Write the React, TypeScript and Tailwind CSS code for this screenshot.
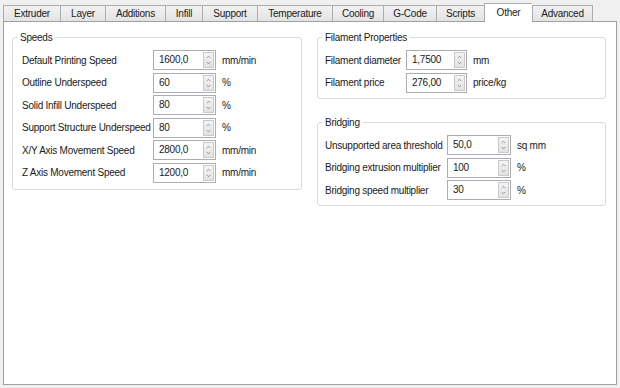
import { ChevronUp, ChevronDown } from "lucide-react";

type Field = { label: string; value: string; unit: string };

const tabs: { name: string; w: string }[] = [
  { name: "Extruder", w: "w-[57px]" },
  { name: "Layer", w: "w-[45px]" },
  { name: "Additions", w: "w-[60px]" },
  { name: "Infill", w: "w-[37px]" },
  { name: "Support", w: "w-[55px]" },
  { name: "Temperature", w: "w-[75px]" },
  { name: "Cooling", w: "w-[51px]" },
  { name: "G-Code", w: "w-[53px]" },
  { name: "Scripts", w: "w-[48px]" },
  { name: "Other", w: "w-[48px]" },
  { name: "Advanced", w: "w-[61px]" },
];

const speeds: Field[] = [
  { label: "Default Printing Speed", value: "1600,0", unit: "mm/min" },
  { label: "Outline Underspeed", value: "60", unit: "%" },
  { label: "Solid Infill Underspeed", value: "80", unit: "%" },
  { label: "Support Structure Underspeed", value: "80", unit: "%" },
  { label: "X/Y Axis Movement Speed", value: "2800,0", unit: "mm/min" },
  { label: "Z Axis Movement Speed", value: "1200,0", unit: "mm/min" },
];

const filament: Field[] = [
  { label: "Filament diameter", value: "1,7500", unit: "mm" },
  { label: "Filament price", value: "276,00", unit: "price/kg" },
];

const bridging: Field[] = [
  { label: "Unsupported area threshold", value: "50,0", unit: "sq mm" },
  { label: "Bridging extrusion multiplier", value: "100", unit: "%" },
  { label: "Bridging speed multiplier", value: "30", unit: "%" },
];

function SpinBox({ value, width }: { value: string; width: string }) {
  return (
    <div className={`flex h-[20px] ${width} items-stretch border border-[#abadb3] bg-white`}>
      <span className="flex-1 pl-[5px] leading-[18px]">{value}</span>
      <div className="my-[1px] mr-[1px] flex w-[11px] flex-col border border-[#c9c9c9] bg-gradient-to-b from-[#f4f4f4] to-[#e2e2e2] text-[#7a7a7a]">
        <ChevronUp size={7} strokeWidth={3} className="mx-auto mt-[1px]" />
        <ChevronDown size={7} strokeWidth={3} className="mx-auto mt-auto mb-[1px]" />
      </div>
    </div>
  );
}

function Group({
  title,
  fields,
  labelW,
  boxW,
  className,
  legendClass,
}: {
  title: string;
  fields: Field[];
  labelW: string;
  boxW: string;
  className?: string;
  legendClass: string;
}) {
  return (
    <fieldset className={`rounded-[3px] border border-[#d5dbe0] ${className ?? ""}`}>
      <legend className={`${legendClass} px-[3px] leading-[13px]`}>{title}</legend>
      <div className="flex flex-col gap-[2.6px]">
        {fields.map((f) => (
          <div key={f.label} className="flex h-[20px] items-center whitespace-nowrap">
            <span className={`${labelW} shrink-0`}>{f.label}</span>
            <SpinBox value={f.value} width={boxW} />
            <span className="ml-[6px]">{f.unit}</span>
          </div>
        ))}
      </div>
    </fieldset>
  );
}

export default function App() {
  return (
    <div className="h-[388px] w-[620px] bg-[#f0f0f0] px-[3px] pt-[3px] text-[10px] tracking-[-0.25px] text-[#1a1a1a] [font-family:'Liberation_Sans',Arial,sans-serif]">
      <div className="flex h-[18px] items-end">
        {tabs.map((t, i) => {
          const active = t.name === "Other";
          return (
            <div
              key={t.name}
              className={`${t.w} flex items-center justify-center border-t border-l border-[#acacac] ${
                i === tabs.length - 1 ? "border-r" : ""
              } ${
                active
                  ? "relative z-10 -mb-px h-[19px] bg-white pb-[2px]"
                  : "h-[16px] bg-gradient-to-b from-[#f2f2f2] to-[#e3e3e3]"
              }`}
            >
              {t.name}
            </div>
          );
        })}
      </div>
      <div className="flex h-[364px] w-[614px] gap-[15px] border border-[#a0a0a0] bg-white px-[8px] pt-[9px]">
        <Group
          title="Speeds"
          fields={speeds}
          labelW="w-[131px]"
          boxW="w-[63px]"
          legendClass="-ml-[5px]"
          className="h-[159px] w-[290px] pl-[9px] pt-[6px]"
        />
        <div className="flex w-[289px] flex-col gap-[17px]">
          <Group
            title="Filament Properties"
            fields={filament}
            labelW="w-[81px]"
            boxW="w-[61px]"
            legendClass="-ml-[3px]"
            className="h-[68px] pl-[7px] pt-[6px]"
          />
          <Group
            title="Bridging"
            fields={bridging}
            labelW="w-[122px]"
            boxW="w-[64px]"
            legendClass="-ml-[3px]"
            className="h-[90px] pl-[7px] pt-[6px]"
          />
        </div>
      </div>
    </div>
  );
}
